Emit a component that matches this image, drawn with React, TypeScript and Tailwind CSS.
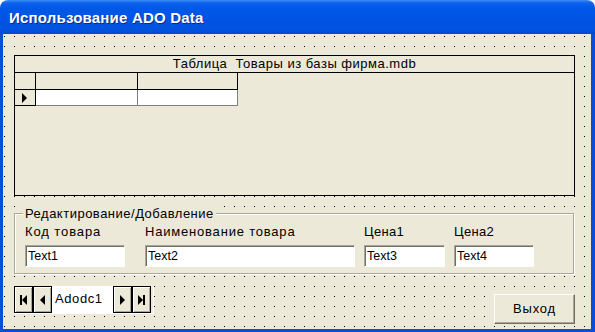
import React from "react";

const Tri = ({ dir }: { dir: "l" | "r" }) => (
  <svg width="5" height="10" viewBox="0 0 5 10">
    {dir === "r" ? <path d="M0 0 L5 5 L0 10 Z" fill="#000" /> : <path d="M5 0 L0 5 L5 10 Z" fill="#000" />}
  </svg>
);

const NavBtn = ({ kind }: { kind: "first" | "prev" | "next" | "last" }) => (
  <div className="w-[19px] h-full bg-[#ECE9D8] border border-black flex items-center justify-center shadow-[inset_1px_1px_#fff,inset_-1px_-1px_#ACA899]">
    {kind === "first" && (
      <div className="flex items-center">
        <div className="w-[2px] h-[10px] bg-black" />
        <Tri dir="l" />
      </div>
    )}
    {kind === "prev" && <Tri dir="l" />}
    {kind === "next" && <Tri dir="r" />}
    {kind === "last" && (
      <div className="flex items-center">
        <Tri dir="r" />
        <div className="w-[2px] h-[10px] bg-black" />
      </div>
    )}
  </div>
);

const TextBox = ({ w, text }: { w: string; text: string }) => (
  <div
    className={`${w} h-[22px] bg-white border-t border-l border-[#ACA899] border-r-white border-b-white border-r border-b shadow-[inset_1px_1px_#716F64] pl-[2px] text-[12.5px] leading-[19px] pt-[1px] text-black`}
  >
    {text}
  </div>
);

export default function App() {
  return (
    <div className="w-[595px] h-[332px] bg-white flex flex-col font-['Liberation_Sans',Arial,sans-serif] text-black overflow-hidden">
      <div className="h-[34px] shrink-0 rounded-t-[8px] bg-[linear-gradient(to_bottom,#3B8CF7_0px,#0D63EE_3px,#0058E8_8px,#0053E2_60%,#0052DE_90%,#0047C8_100%)] flex items-center pl-[9px] pt-[3px]">
        <span className="text-white font-bold text-[15px] tracking-[0.2px] [text-shadow:1px_1px_#0B2A8C]">Использование ADO Data</span>
      </div>
      <div className="flex-1 border-l-[3px] border-r-[4px] border-b-[3px] border-[#0A4CDB] bg-black bg-[image:linear-gradient(to_bottom,transparent_1px,#ECE9D8_1px),linear-gradient(to_right,transparent_1px,#ECE9D8_1px)] bg-[length:10px_10px] bg-[position:1px_2px] pl-[11px] pt-[21px] flex flex-col">
        {/* DataGrid */}
        <div className="w-[561px] h-[141px] border border-black bg-[#ECE9D8] flex flex-col text-[13px] tracking-[0.5px]">
          <div className="h-[17px] border-b border-black text-center leading-[16px]">Таблица&nbsp; Товары из базы фирма.mdb</div>
          <div className="flex h-[17px]">
            <div className="w-[21px] border-r border-b border-black" />
            <div className="w-[102px] border-r border-b border-black" />
            <div className="w-[100px] border-r border-b border-black" />
          </div>
          <div className="flex h-[16px]">
            <div className="w-[21px] border-r border-b border-black flex items-center pl-[7px]">
              <Tri dir="r" />
            </div>
            <div className="w-[102px] bg-white border-r border-b border-[#808080]" />
            <div className="w-[100px] bg-white border-r border-b border-[#808080]" />
          </div>
        </div>

        {/* Frame */}
        <fieldset className="mt-[10px] w-[560px] h-[68px] bg-[#ECE9D8] border border-[#ACA899] shadow-[inset_1px_1px_#fff,1px_1px_#fff] text-[13px] tracking-[0.5px]">
          <legend className="ml-[8px] px-[2px] leading-[15px] bg-[#ECE9D8]">Редактирование/Добавление</legend>
          <div className="flex pl-[10px] pt-[3px]">
            <div className="flex flex-col w-[100px]">
              <span className="leading-[15px] tracking-[0.9px]">Код товара</span>
              <div className="mt-[6px] tracking-normal"><TextBox w="w-[100px]" text="Text1" /></div>
            </div>
            <div className="flex flex-col w-[210px] ml-[20px]">
              <span className="leading-[15px] tracking-[0.8px]">Наименование товара</span>
              <div className="mt-[6px] tracking-normal"><TextBox w="w-[210px]" text="Text2" /></div>
            </div>
            <div className="flex flex-col w-[80px] ml-[9px]">
              <span className="leading-[15px] tracking-[0.3px]">Цена1</span>
              <div className="mt-[6px] tracking-normal"><TextBox w="w-[81px]" text="Text3" /></div>
            </div>
            <div className="flex flex-col w-[80px] ml-[10px]">
              <span className="leading-[15px] tracking-[0.3px]">Цена2</span>
              <div className="mt-[6px] tracking-normal"><TextBox w="w-[80px]" text="Text4" /></div>
            </div>
          </div>
        </fieldset>

        {/* Bottom row */}
        <div className="w-[561px] flex justify-between items-start mt-[12px]">
          <div className="w-[140px] h-[28px] flex border-b border-r border-white">
            <NavBtn kind="first" />
            <NavBtn kind="prev" />
            <div className="w-[61px] bg-white text-[13px] tracking-[0.6px] leading-[26px] pl-[3px]">Adodc1</div>
            <NavBtn kind="next" />
            <NavBtn kind="last" />
          </div>
          <div className="mt-[8px] w-[81px] h-[30px] bg-[#ECE9D8] border-t border-l border-white border-r border-b border-r-[#716F64] border-b-[#716F64] shadow-[inset_-1px_-1px_#ACA899] flex items-center justify-center text-[13px] tracking-[0.8px]">
            Выход
          </div>
        </div>
      </div>
    </div>
  );
}
